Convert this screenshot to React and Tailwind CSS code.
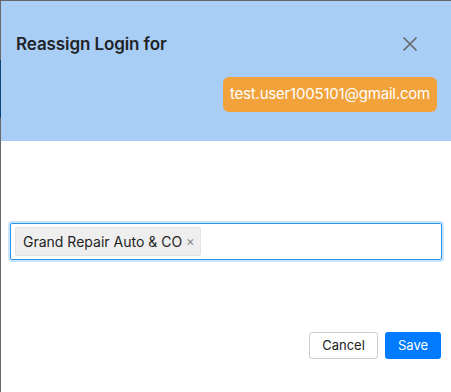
export default function App() {
  return (
    <div className="h-[392px] w-[451px] overflow-hidden bg-[#666] font-['Inter',sans-serif] flex flex-col">
      <div className="h-px shrink-0" />
      <div className="flex flex-1 min-h-0">
        {/* strip of the page behind the overlay */}
        <div className="w-px shrink-0 flex flex-col">
          <div className="h-[59px] bg-[#6a6a6a]" />
          <div className="h-[58px] bg-[#0e4677]" />
          <div className="flex-1 bg-[#6a6a6a]" />
        </div>

        <div className="flex-1 flex flex-col bg-white">
          {/* header */}
          <div className="h-[140px] shrink-0 bg-[#a9cef6] px-[15px] flex flex-col">
            <div className="flex items-center justify-between pt-[31px]">
              <h2 className="text-[17px] font-semibold text-[#1f2328] leading-[24px] tracking-[-0.1px]">Reassign Login for</h2>
              <button className="mr-[18px] text-[#666]">
                <svg width="16" height="16" viewBox="0 0 16 16" fill="none" stroke="currentColor" strokeWidth="1.6">
                  <path d="M1.5 1.5 L14.5 14.5 M14.5 1.5 L1.5 14.5" />
                </svg>
              </button>
            </div>
            <div className="flex justify-end mt-[21px] mr-[-1px]">
              <span className="bg-[#f2a23a] text-white rounded-[6px] h-[35px] px-[7px] flex items-center text-[15px] tracking-[-0.2px]">
                test.user1005101@gmail.com
              </span>
            </div>
          </div>

          {/* body */}
          <div className="flex-1 px-[9px] pt-[82px] flex flex-col">
            <div className="h-[37px] border border-[#2a93ef] rounded-[2px] shadow-[0_0_0_2px_rgba(42,147,239,0.25)] flex items-center px-[4px]">
              <span className="h-[29px] bg-[#eeeeee] border border-[#e2e2e2] rounded-[2px] flex items-center pl-[7px] pr-[5px] text-[14px] text-[#222]">
                Grand Repair Auto &amp; CO
                <span className="ml-[4px] text-[13px] text-[#888]">×</span>
              </span>
            </div>

            <div className="flex justify-end gap-[7px] mt-[72px] pr-px">
              <button className="h-[27px] w-[69px] border border-[#ccc] rounded-[3px] bg-white text-[13px] text-[#222]">Cancel</button>
              <button className="h-[27px] w-[56px] rounded-[3px] bg-[#007bff] text-[13px] text-white">Save</button>
            </div>
          </div>
        </div>
      </div>
    </div>
  );
}
